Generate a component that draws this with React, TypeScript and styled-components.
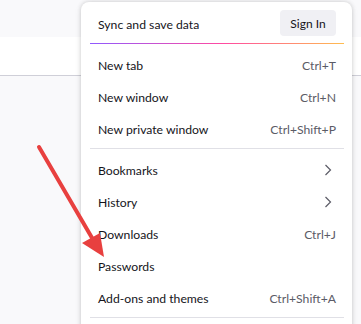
import styled, { createGlobalStyle } from "styled-components";

const GlobalStyle = createGlobalStyle`
    html, body {
        margin: 0;
        padding: 0;
        background: #f9f9fb;
    }
    body {
        font-family: Lato, "Noto Sans", sans-serif;
    }
`;

type MenuEntry =
    | { kind: "item"; label: string; shortcut?: string; submenu?: boolean }
    | { kind: "separator" };

const entries: MenuEntry[] = [
    { kind: "item", label: "New tab", shortcut: "Ctrl+T" },
    { kind: "item", label: "New window", shortcut: "Ctrl+N" },
    { kind: "item", label: "New private window", shortcut: "Ctrl+Shift+P" },
    { kind: "separator" },
    { kind: "item", label: "Bookmarks", submenu: true },
    { kind: "item", label: "History", submenu: true },
    { kind: "item", label: "Downloads", shortcut: "Ctrl+J" },
    { kind: "item", label: "Passwords" },
    { kind: "item", label: "Add-ons and themes", shortcut: "Ctrl+Shift+A" },
    { kind: "separator" },
];

const Chevron = () => (
    <ChevronIcon width="8" height="12" viewBox="0 0 8 12" fill="none">
        <path d="M1.5 1 L6.5 6 L1.5 11" stroke="#5b5b66" strokeWidth="1.2" />
    </ChevronIcon>
);

const App = () => {
    return (
        <>
            <GlobalStyle />
            <Page>
                <TabStrip />
                <Toolbar />
                <Content />
                <Menu>
                    <SyncHeader>
                        <SyncLabel>Sync and save data</SyncLabel>
                        <SignInButton>Sign In</SignInButton>
                    </SyncHeader>
                    <GradientLine />
                    {entries.map((entry, i) =>
                        entry.kind === "separator" ? (
                            <Separator key={i} />
                        ) : (
                            <MenuItem key={i}>
                                <ItemLabel>{entry.label}</ItemLabel>
                                {entry.shortcut && <Shortcut>{entry.shortcut}</Shortcut>}
                                {entry.submenu && <Chevron />}
                            </MenuItem>
                        )
                    )}
                </Menu>
                <Arrow width="120" height="270" viewBox="0 0 120 270">
                    <line x1="39" y1="147" x2="95" y2="243" stroke="#e8403f" strokeWidth="4" strokeLinecap="round" />
                    <polygon points="104,257 82,243 100,233" fill="#e8403f" />
                </Arrow>
            </Page>
        </>
    );
};

export default App;

const Page = styled.div`
    position: relative;
    width: 361px;
    height: 324px;
    overflow: hidden;
    display: flex;
    flex-direction: column;
`;

const TabStrip = styled.div`
    height: 37px;
    background: #f9f9fb;
`;

const Toolbar = styled.div`
    height: 38px;
    background: #ffffff;
    border-bottom: 1px solid #cfcfd8;
`;

const Content = styled.div`
    flex: 1;
    background: #f9f9fb;
`;

const Menu = styled.div`
    position: absolute;
    left: 81px;
    top: 2px;
    width: 271px;
    height: 340px;
    background: #ffffff;
    border-radius: 8px;
    box-shadow: 0 0 4px rgba(0, 0, 0, 0.18), 0 2px 8px rgba(0, 0, 0, 0.06);
    display: flex;
    flex-direction: column;
    color: #15141a;
    font-size: 12.2px;
`;

const SyncHeader = styled.div`
    display: flex;
    align-items: center;
    justify-content: space-between;
    padding: 8px 16px 7px 17px;
`;

const SyncLabel = styled.span`
    margin-top: 3px;
`;

const SignInButton = styled.button`
    height: 26px;
    width: 56px;
    border: none;
    border-radius: 4px;
    background: #f0f0f4;
    color: #15141a;
    font-family: inherit;
    font-size: 12px;
    padding: 0;
`;

const GradientLine = styled.div`
    height: 1px;
    margin: 0 8px 5px 9px;
    background: linear-gradient(90deg, #9059ff 0%, #ff4aa2 52%, #ffbd4f 100%);
`;

const MenuItem = styled.div`
    height: 32px;
    display: flex;
    align-items: center;
    justify-content: space-between;
    padding: 0 16px 0 17px;
`;

const ItemLabel = styled.span``;

const Shortcut = styled.span`
    color: #5b5b66;
`;

const ChevronIcon = styled.svg`
    margin-right: 4px;
`;

const Separator = styled.div`
    height: 1px;
    margin: 3px 8px 5px 9px;
    background: #e0e0e6;
`;

const Arrow = styled.svg`
    position: absolute;
    left: 0;
    top: 0;
`;
